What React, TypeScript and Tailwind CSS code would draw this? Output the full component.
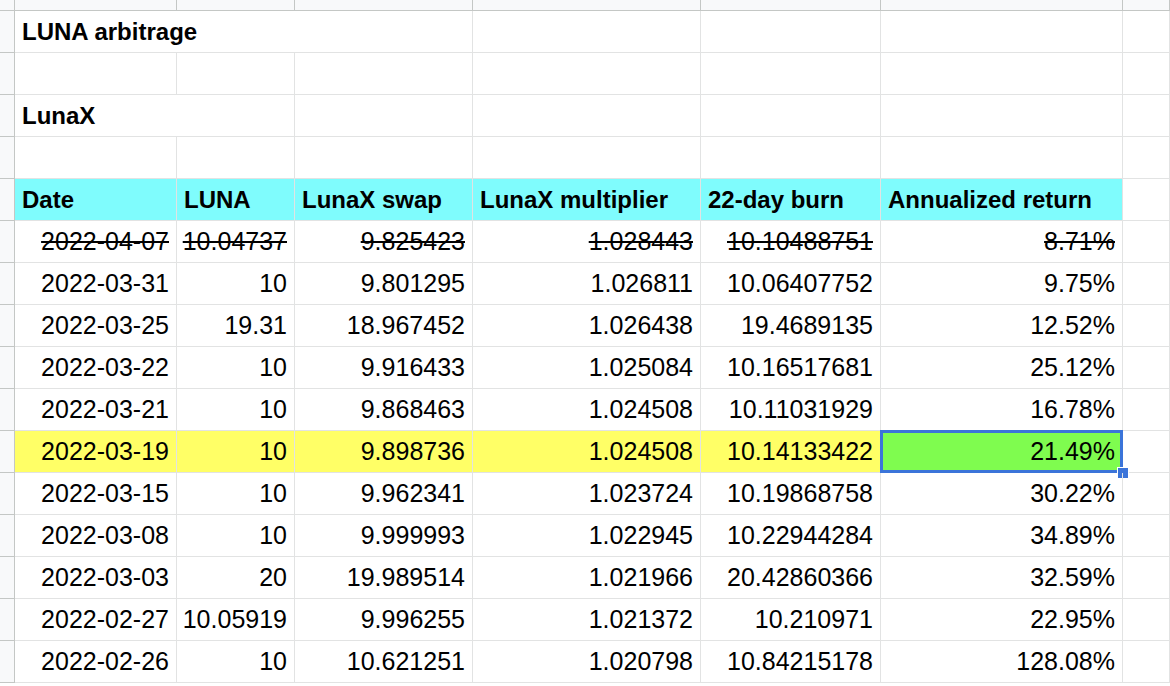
const W = [162, 118, 178, 228, 180, 242, 47];
const rows: string[][] = [
  ["2022-04-07","10.04737","9.825423","1.028443","10.10488751","8.71%"],
  ["2022-03-31","10","9.801295","1.026811","10.06407752","9.75%"],
  ["2022-03-25","19.31","18.967452","1.026438","19.4689135","12.52%"],
  ["2022-03-22","10","9.916433","1.025084","10.16517681","25.12%"],
  ["2022-03-21","10","9.868463","1.024508","10.11031929","16.78%"],
  ["2022-03-19","10","9.898736","1.024508","10.14133422","21.49%"],
  ["2022-03-15","10","9.962341","1.023724","10.19868758","30.22%"],
  ["2022-03-08","10","9.999993","1.022945","10.22944284","34.89%"],
  ["2022-03-03","20","19.989514","1.021966","20.42860366","32.59%"],
  ["2022-02-27","10.05919","9.996255","1.021372","10.210971","22.95%"],
  ["2022-02-26","10","10.621251","1.020798","10.84215178","128.08%"],
];
const heads = ["Date","LUNA","LunaX swap","LunaX multiplier","22-day burn","Annualized return"];

function Cell({ w, children, cls = "" }: { w: number; children?: any; cls?: string }) {
  return (
    <div style={{ width: w }} className={`h-[42px] shrink-0 border-r border-b border-[#e2e3e3] flex items-center ${cls}`}>
      {children}
    </div>
  );
}

function Rh() {
  return <div className="w-[15px] h-[42px] shrink-0 bg-[#f8f9fa] border-r border-b border-[#c4c7c5]" />;
}

export default function App() {
  return (
    <div className="w-[1170px] h-[686px] overflow-hidden bg-white text-black text-[25px]" style={{ fontFamily: "Arial, 'Liberation Sans', sans-serif" }}>
      <div className="flex h-[11px]">
        <div className="w-[15px] bg-[#f8f9fa] border-r border-b border-[#c4c7c5]" />
        {W.map((w, i) => <div key={i} style={{ width: w }} className="shrink-0 bg-[#f8f9fa] border-r border-b border-[#c4c7c5]" />)}
      </div>
      <div className="flex"><Rh /><Cell w={W[0]+W[1]+W[2]} cls="font-bold pl-[7px] text-[24px]">LUNA arbitrage</Cell>{W.slice(3).map((w,i)=><Cell key={i} w={w} />)}</div>
      <div className="flex"><Rh />{W.map((w,i)=><Cell key={i} w={w} />)}</div>
      <div className="flex"><Rh /><Cell w={W[0]+W[1]} cls="font-bold pl-[7px] text-[24px]">LunaX</Cell>{W.slice(2).map((w,i)=><Cell key={i} w={w} />)}</div>
      <div className="flex"><Rh />{W.map((w,i)=><Cell key={i} w={w} />)}</div>
      <div className="flex"><Rh />
        {heads.map((h,i)=><Cell key={i} w={W[i]} cls="bg-[#7ffcfd] border-[#6fe3e6] font-bold pl-[7px] whitespace-nowrap text-[24px]">{h}</Cell>)}
        <Cell w={W[6]} />
      </div>
      {rows.map((r, ri) => (
        <div key={ri} className="flex"><Rh />
          {r.map((v, i) => {
            const hl = ri === 5;
            const sel = hl && i === 5;
            return (
              <Cell key={i} w={W[i]} cls={`justify-end pr-[7px] whitespace-nowrap relative ${hl ? (sel ? "bg-[#7ffc4f]" : "bg-[#ffff66]") : ""}`}>
                <span className={ri === 0 ? "line-through" : ""}>{v}</span>
                {sel && <>
                  <div className="absolute -left-px -top-px -right-px -bottom-px border-[3px] border-[#3b74d9]" />
                  <div className="absolute -right-[7px] -bottom-[7px] w-[12px] h-[12px] bg-[#3b74d9] border border-white" />
                </>}
              </Cell>
            );
          })}
          <Cell w={W[6]} />
        </div>
      ))}
    </div>
  );
}
